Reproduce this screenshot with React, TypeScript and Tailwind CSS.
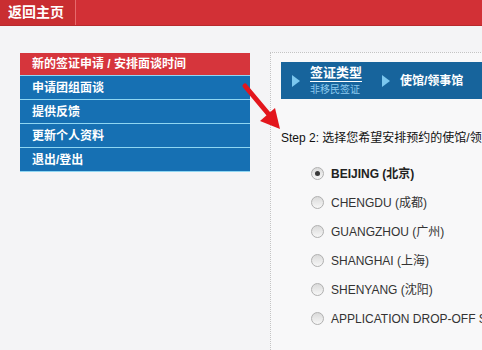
import React from 'react';

const menu = [
  { label: '新的签证申请 / 安排面谈时间', active: true },
  { label: '申请团组面谈', active: false },
  { label: '提供反馈', active: false },
  { label: '更新个人资料', active: false },
  { label: '退出/登出', active: false },
];

const posts = [
  { en: 'BEIJING', zh: '北京', checked: true },
  { en: 'CHENGDU', zh: '成都', checked: false },
  { en: 'GUANGZHOU', zh: '广州', checked: false },
  { en: 'SHANGHAI', zh: '上海', checked: false },
  { en: 'SHENYANG', zh: '沈阳', checked: false },
  { en: 'APPLICATION DROP-OFF SITES', zh: '', checked: false },
];

function Radio({ checked }: { checked: boolean }) {
  return (
    <span className="flex h-[13px] w-[13px] shrink-0 items-center justify-center rounded-full border border-[#b0b0b0] bg-gradient-to-b from-[#dadada] to-[#f7f7f7]">
      {checked && <span className="h-[5px] w-[5px] rounded-full bg-[#3a3a3a]" />}
    </span>
  );
}

function Tri() {
  return (
    <svg width="8" height="12" viewBox="0 0 8 12" className="shrink-0">
      <polygon points="0,0 8,6 0,12" fill="#7cc7ee" />
    </svg>
  );
}

export default function App() {
  return (
    <div
      className="relative h-[350px] w-[482px] overflow-hidden bg-[#f4f4f6]"
      style={{ fontFamily: '"Liberation Sans", Arial, "Noto Sans CJK SC", sans-serif' }}
    >
      {/* top bar */}
      <header className="flex h-[26px] border-b border-[#b82a2d] bg-[#d23036]">
        <div className="flex w-[76px] items-center border-r border-[#e66a6c] bg-[#c92e31] pl-2 text-[14px] font-bold text-white">
          返回主页
        </div>
      </header>

      <div className="flex pl-5 pt-[26px]">
        {/* left menu */}
        <nav className="mt-px flex w-[230px] shrink-0 flex-col self-start">
          {menu.map((m) => (
            <div
              key={m.label}
              className={
                m.active
                  ? 'flex h-[23px] items-center border-b border-[#8fd6f2] bg-[#d6353c] pl-3 text-[12px] font-bold text-white'
                  : 'flex h-[24px] items-center border-b border-[#8fd6f2] bg-[#1670b3] pl-3 text-[12px] font-bold text-white'
              }
            >
              {m.label}
            </div>
          ))}
        </nav>

        {/* right panel */}
        <div className="ml-5 min-h-[300px] flex-1 border-l border-t border-dotted border-[#c4c4c4] bg-[#f8f8f9] pl-[10px] pt-[9px]">
          <div className="flex h-[37px] items-center bg-[#17649c] pl-[11px] text-white">
            <Tri />
            <div className="ml-[10px] flex flex-col leading-none">
              <span className="border-b border-white pb-[2px] text-[13px] font-bold">签证类型</span>
              <span className="mt-[3px] text-[10px] text-[#8cc9ee]">非移民签证</span>
            </div>
            <span className="ml-[20px]">
              <Tri />
            </span>
            <span className="ml-[10px] whitespace-nowrap text-[12px] font-bold">使馆/领事馆</span>
          </div>

          <div className="mt-[30px] whitespace-nowrap text-[12px] leading-[18px] text-[#111]">
            Step 2: 选择您希望安排预约的使馆/领事馆
          </div>

          <div className="mt-[12px] flex flex-col pl-[30px]">
            {posts.map((p) => (
              <label key={p.en} className="flex h-[29px] items-center gap-[7px] whitespace-nowrap text-[12px] text-[#333]">
                <Radio checked={p.checked} />
                <span className={p.checked ? 'font-bold text-[#222]' : ''}>
                  {p.en}
                  {p.zh && ` (${p.zh})`}
                </span>
              </label>
            ))}
          </div>
        </div>
      </div>

      {/* red arrow */}
      <svg className="absolute left-[238px] top-[80px]" width="50" height="56" viewBox="0 0 50 56">
        <line x1="7" y1="6" x2="33" y2="37" stroke="#e3161d" strokeWidth="5" strokeLinecap="round" />
        <polygon points="42,49 22,41 37,28" fill="#e3161d" />
      </svg>
    </div>
  );
}
